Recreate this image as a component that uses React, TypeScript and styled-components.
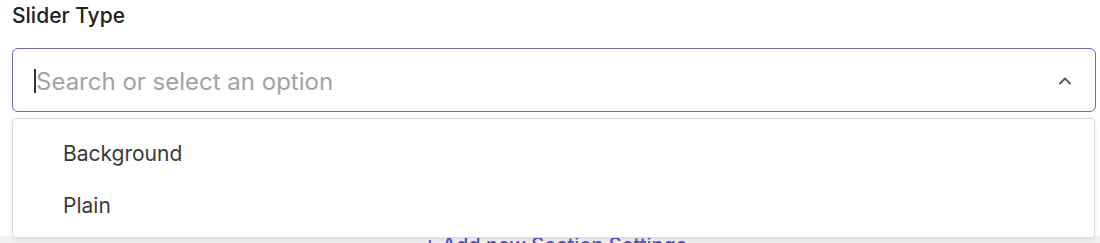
import React from "react";
import styled, { createGlobalStyle } from "styled-components";

const Global = createGlobalStyle`
  html, body { margin: 0; padding: 0; background: #ffffff; }
  body { font-family: Inter, "Noto Sans", sans-serif; overflow: hidden; }
`;

const Page = styled.div`
  padding: 4px 4px 0 12px;
  height: 243px;
  box-sizing: border-box;
  overflow: hidden;
`;

const Label = styled.div`
  font-size: 21px;
  font-weight: 500;
  color: #222222;
  line-height: 24px;
  margin-bottom: 20px;
`;

const Field = styled.div`
  position: relative;
`;

const InputBox = styled.div`
  height: 64px;
  box-sizing: border-box;
  border: 1.5px solid #6e66b8;
  border-radius: 6px;
  display: flex;
  align-items: center;
  padding: 2px 20px 0 21px;
  background: #fff;
`;

const Caret = styled.span`
  width: 2px;
  height: 24px;
  background: #333;
  flex: none;
`;

const Input = styled.input`
  flex: 1;
  border: none;
  outline: none;
  font-family: Inter, "Noto Sans", sans-serif;
  font-size: 24px;
  color: #333;
  caret-color: transparent;
  background: transparent;
  padding: 0;
  &::placeholder { color: #a3a3a3; }
`;

const Chevron = styled.svg`
  width: 20px;
  height: 20px;
  color: #555;
  flex: none;
`;

const Menu = styled.ul`
  position: absolute;
  left: 0;
  right: 1px;
  top: 70px;
  margin: 0;
  padding: 8px 0 6px;
  list-style: none;
  background: #fff;
  border: 1px solid #dcdcdf;
  border-radius: 4px;
  box-shadow: 0 2px 4px rgba(0, 0, 0, 0.08);
  z-index: 2;
`;

const Item = styled.li`
  height: 52px;
  display: flex;
  align-items: center;
  padding-left: 50px;
  font-size: 21px;
  color: #3a3a3a;
`;

const Below = styled.div`
  margin-top: 124px;
  margin-left: -12px;
  margin-right: -4px;
  height: 24px;
  background: #f1f1f4;
  display: flex;
  align-items: flex-start;
  justify-content: center;
`;

const AddButton = styled.button`
  border: none;
  background: transparent;
  color: #5a50c2;
  font-family: Inter, "Noto Sans", sans-serif;
  font-size: 20px;
  font-weight: 500;
  margin-left: 10px;
  margin-top: -2px;
  line-height: 22px;
  padding: 0;
`;

export default function App() {
  return (
    <>
      <Global />
      <Page>
        <Label>Slider Type</Label>
        <Field>
          <InputBox>
            <Caret />
            <Input placeholder="Search or select an option" />
            <Chevron viewBox="0 0 24 24" fill="none" stroke="currentColor" strokeWidth="2.2" strokeLinecap="round" strokeLinejoin="round">
              <path d="M6 15l6-6 6 6" />
            </Chevron>
          </InputBox>
          <Menu>
            <Item>Background</Item>
            <Item>Plain</Item>
          </Menu>
          <Below>
            <AddButton>+ Add new Section Settings</AddButton>
          </Below>
        </Field>
      </Page>
    </>
  );
}
